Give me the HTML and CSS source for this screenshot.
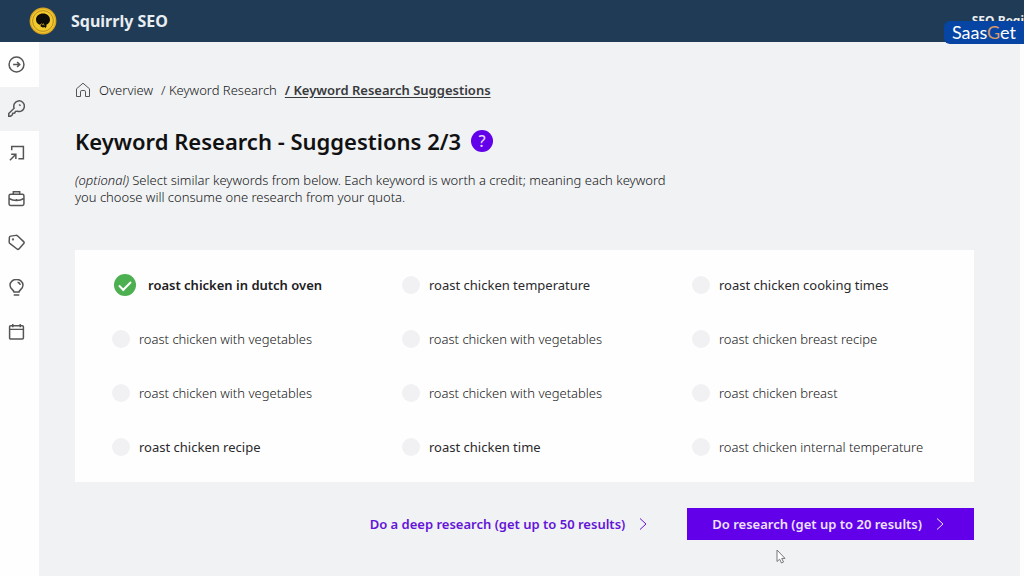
FILE: index.html
```html
<!DOCTYPE html>
<html lang="en">
<head>
  <meta charset="UTF-8">
  <title>Squirrly SEO - Keyword Research</title>
  <meta name="viewport" content="width=device-width,initial-scale=1">
  <link rel="stylesheet" href="styles.css">
</head>
<body>
  <header class="topbar">
    <svg class="logo" viewBox="0 0 28 28" width="28" height="28">
      <circle cx="14" cy="14" r="13.4" fill="#d9a521"/>
      <circle cx="14" cy="14" r="12" fill="#f2c92e"/>
      <circle cx="14" cy="14" r="10.4" fill="none" stroke="#a97c16" stroke-width=".8"/>
      <path d="M14 6.500c-4 0-7 2.600-7 6 0 2.500 1.300 4.300 3.400 5.200l1.600-.7-.6 2.200 2.400 1.300 2-.6.2 1.600 1.600-2.200-.3-1.600c2.200-.8 3.700-2.600 3.700-5 0-3.600-3-6.200-7-6.200z" fill="#0c0b07"/>
      <path d="M12.200 16.500l1.300 1.300.8-1.100.9 1.800" fill="none" stroke="#f2c92e" stroke-width=".7"/>
    </svg>
    <span class="brand">Squirrly SEO</span>
    <span class="level">SEO Begi</span>
    <div class="watermark">Saas<span>G</span>et</div>
  </header>

  <div class="page">
    <nav class="sidebar">
      <div class="menu">
        <a href="#" aria-label="Start">
          <svg viewBox="0 0 16 16"><circle cx="8" cy="8" r="7"/><path d="M4.800 8h6M8.600 5.600L11 8l-2.400 2.400" stroke-width="1.500"/></svg>
        </a>
        <a href="#" class="active" aria-label="Keyword research">
          <svg viewBox="0 0 16 16"><path d="M5.800 7.700A5 5 0 1 1 9 10.600l-1.900.1-.8 1.500-1.700.3-.7 1.700-1.500 1H.7v-2.500z"/><path d="M10.500 4.200l1.300 1.200"/></svg>
        </a>
        <a href="#" aria-label="Live assistant">
          <svg viewBox="0 0 16 16"><path d="M3.500 5V1.500h11v11.500H9.800M1.800 14.300l5.400-5.400M3 8.600h4.400v4.600"/></svg>
        </a>
        <a href="#" aria-label="Briefcase">
          <svg viewBox="0 0 16 16"><rect x="1" y="4" width="14" height="10.500" rx="1.500"/><path d="M5 4V1.600h6V4M1 8c4 2.500 10 2.500 14 0M8 8.500v2"/></svg>
        </a>
        <a href="#" aria-label="Tags">
          <svg viewBox="0 0 16 16"><path d="M1.300 3.200q.2-1 1.200-1.200l5-.7q.8-.1 1.400.4l5.800 5.500q.9.900.1 1.800l-4.500 5q-.9.900-1.800.1L1.700 8.800q-.7-.6-.6-1.500z"/><circle cx="4.700" cy="5" r=".4"/></svg>
        </a>
        <a href="#" aria-label="Ideas">
          <svg viewBox="0 0 16 16"><path d="M5.600 12.300c0-2-3.700-3-3.700-6.500a6.100 5.400 0 0 1 12.200 0c0 3.500-3.700 4.500-3.700 6.500zM5.400 15h5.200M9 3c1.400.3 2.300 1.200 2.600 2.500"/></svg>
        </a>
        <a href="#" aria-label="Calendar">
          <svg viewBox="0 0 16 16"><rect x="1.500" y="2.500" width="13" height="12.500" rx="1"/><path d="M1.500 6h13M4.500 1v3M11.500 1v3"/></svg>
        </a>
      </div>
    </nav>

    <main class="content">
      <nav class="crumbs">
        <svg viewBox="0 0 16 16"><path d="M1.500 6.800L8 1.200l6.500 5.600v7.700h-4V9.800q0-1.300-1.300-1.300H6.800q-1.300 0-1.300 1.300v4.700h-4z"/></svg>
        <a href="#">Overview</a>
        <a href="#">/ Keyword Research</a>
        <a href="#" class="current">/ Keyword Research Suggestions</a>
      </nav>

      <div class="title">
        <h1>Keyword Research - Suggestions 2/3</h1>
        <button class="help">?</button>
      </div>
      <p class="intro"><em>(optional)</em> Select similar keywords from below. Each keyword is worth a credit; meaning each keyword you choose will consume one research from your quota.</p>

      <form class="keywords">
        <label><input type="checkbox" checked><span>roast chicken in dutch oven</span></label>
        <label class="dark"><input type="checkbox"><span>roast chicken temperature</span></label>
        <label class="dark"><input type="checkbox"><span>roast chicken cooking times</span></label>
        <label><input type="checkbox"><span>roast chicken with vegetables</span></label>
        <label><input type="checkbox"><span>roast chicken with vegetables</span></label>
        <label><input type="checkbox"><span>roast chicken breast recipe</span></label>
        <label><input type="checkbox"><span>roast chicken with vegetables</span></label>
        <label><input type="checkbox"><span>roast chicken with vegetables</span></label>
        <label><input type="checkbox"><span>roast chicken breast</span></label>
        <label class="dark"><input type="checkbox"><span>roast chicken recipe</span></label>
        <label class="dark"><input type="checkbox"><span>roast chicken time</span></label>
        <label><input type="checkbox"><span>roast chicken internal temperature</span></label>
      </form>

      <div class="actions">
        <button class="btn-link">Do a deep research (get up to 50 results)
          <svg viewBox="0 0 8 12"><path d="M1 .5L7 6l-6 5.500"/></svg>
        </button>
        <button class="btn-main">Do research (get up to 20 results)
          <svg viewBox="0 0 8 12"><path d="M1 .5L7 6l-6 5.500"/></svg>
        </button>
      </div>
    </main>
  </div>

  <svg class="cursor" viewBox="0 0 10 15" width="10" height="15"><path d="M1 1v11.500l2.600-2.300 1.900 3.800 2-1-1.800-3.600H9z"/></svg>
</body>
</html>
```

FILE: styles.css
```css
:root {
  --navy: #1f3b55;
  --bg: #f0f2f4;
  --purple: #6200ea;
  --text: #151517;
  --icon: #555558;
}
* {box-sizing:border-box;}
body {
  margin:0; min-height:100vh;
  display:flex; flex-direction:column;
  font-family:"Noto Sans", sans-serif; font-size:13px; font-weight:350;
  background:var(--bg); color:var(--text);
  overflow:hidden;
}
a {color:inherit; text-decoration:none;}
button {
  font:inherit; color:inherit;
  border:0; padding:0; background:none; cursor:pointer;
}
svg {fill:none; stroke:currentColor;}

.topbar {
  position:relative; height:42px;
  display:flex; align-items:center;
  padding-left:29px;
  background:var(--navy); color:#e9eef3;
}
.logo {stroke:none; margin-right:14px;}
.brand {font-size:16px; line-height:24px; font-weight:700;}
.level {margin-left:auto; font-size:12px; line-height:18px; font-weight:700; white-space:nowrap;}
.watermark {
  position:absolute; top:21px; right:0;
  height:23px; padding:0 8px;
  border-radius:6px 0 0 6px;
  background:#0745a5; color:#fff;
  font-family:Lato, sans-serif; font-size:18px; font-weight:400; line-height:22px;
}
.watermark span {color:#d99a68;}

.page {flex:1; display:flex; border-right:4px solid #fdfdfd;}
.sidebar {width:39px; background:#fefefe; flex-shrink:0;}
.menu {display:flex; flex-direction:column; height:312px; color:var(--icon);}
.menu a {flex:1; padding-left:8px; display:flex; align-items:center;}
.menu .active {background:var(--bg);}
.menu svg {width:17px; height:17px; stroke-width:1.4;}

.content {flex:1; padding:39px 46px 0 36px;}

.crumbs {display:flex; align-items:center; gap:8px; line-height:18px; white-space:nowrap;}
.crumbs svg {width:16px; height:16px; stroke:var(--icon); stroke-width:1;}
.crumbs .current {font-weight:600; text-decoration:underline; text-underline-offset:2px; color:#39393c;}

.title {display:flex; align-items:center; gap:10px; margin-top:27px;}
h1 {margin:0; font-size:22px; line-height:30px; font-weight:600; color:#111;}
.help {
  width:22px; height:22px; border-radius:50%;
  background:var(--purple); color:#e3d0ff;
  font-size:16px; line-height:22px; font-weight:500; text-align:center;
}
.intro {max-width:600px; margin:16px 0 44px; line-height:17px;}

.keywords {
  display:grid; grid-template-columns:290px 290px 1fr;
  grid-auto-rows:54px; align-items:center;
  padding:8px 0 8px 37px;
  background:#fefefe;
}
.keywords label {display:flex; align-items:center; gap:9px; white-space:nowrap;}
.keywords .dark {color:#2a2a2d; font-weight:400;}
.keywords input {
  appearance:none; margin:0;
  width:18px; height:18px; border-radius:50%;
  background:#f1f1f4;
  display:grid; place-items:center;
}
.keywords input:checked {width:22px; height:22px; margin:0 3px 0 2px; background:#4caf50;}
.keywords input:checked::after {
  content:""; width:10px; height:5px;
  border:solid #fff; border-width:0 0 2px 2px;
  transform:translateY(-1px) rotate(-45deg);
}
.keywords input:checked + span {font-weight:600; color:#202022;}

.actions {display:flex; justify-content:flex-end; align-items:center; gap:40px; margin-top:26px;}
.actions button {display:flex; align-items:center; gap:14px; font-weight:600; white-space:nowrap;}
.actions svg {width:8px; height:12px; stroke-width:1;}
.btn-link {color:#6414d8;}
.actions .btn-main {
  height:32px; padding:0 30px 0 25px;
  background:var(--purple); color:#eee2ff;
}

.cursor {position:absolute; left:776px; top:549px; fill:#fff; stroke:#77777a;}
```
